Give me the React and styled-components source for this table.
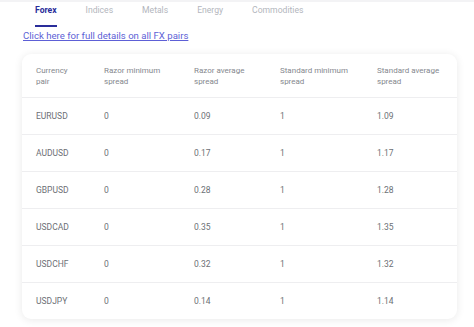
import React from "react";
import styled, { createGlobalStyle } from "styled-components";

const Global = createGlobalStyle`
  html, body { margin: 0; padding: 0; background: #fff; }
  body { font-family: Roboto, "Noto Sans", Arial, sans-serif; }
`;

const Page = styled.div`
  width: 474px;
  height: 327px;
  overflow: hidden;
  border-top: 2px solid #f3f3f5;
  box-sizing: border-box;
`;

const Tabs = styled.div`
  display: flex;
  padding-left: 20.5px;
`;

const Tab = styled.div`
  position: relative;
  padding: 3px 14.5px 0;
  height: 25px;
  box-sizing: border-box;
  font-size: 8.6px;
  font-weight: ${p => (p.$active ? 700 : 400)};
  color: ${p => (p.$active ? "#2a2d9a" : "#b3b6bd")};
  &::after {
    content: "";
    display: ${p => (p.$active ? "block" : "none")};
    position: absolute;
    left: 14.5px;
    right: 14.5px;
    bottom: 0;
    height: 2px;
    background: #2a2d9a;
  }
`;

const Link = styled.a`
  display: block;
  margin: 3px 0 0 23px;
  font-size: 9.6px;
  color: #5d5fd6;
  text-decoration: underline;
`;

const Card = styled.div`
  margin: 13px 0 0 22px;
  width: 435px;
  border-radius: 9px;
  background: #fff;
  box-shadow: 0 1px 8px rgba(0, 0, 0, 0.09);
`;

const Row = styled.div`
  display: grid;
  grid-template-columns: 68px 90px 86px 97px 1fr;
  padding-left: 14px;
  align-items: center;
  height: ${p => (p.$head ? "43px" : "37px")};
  border-top: ${p => (p.$head ? "none" : "1px solid #eeeef0")};
  box-sizing: border-box;
  font-size: ${p => (p.$head ? "8px" : "8.5px")};
  line-height: ${p => (p.$head ? "11px" : "12px")};
  color: ${p => (p.$head ? "#85888e" : "#6c6f75")};
`;

const Cell = styled.div``;

const head = [
  ["Currency", "pair"],
  ["Razor minimum", "spread"],
  ["Razor average", "spread"],
  ["Standard minimum", "spread"],
  ["Standard average", "spread"],
];

const rows = [
  ["EURUSD", "0", "0.09", "1", "1.09"],
  ["AUDUSD", "0", "0.17", "1", "1.17"],
  ["GBPUSD", "0", "0.28", "1", "1.28"],
  ["USDCAD", "0", "0.35", "1", "1.35"],
  ["USDCHF", "0", "0.32", "1", "1.32"],
  ["USDJPY", "0", "0.14", "1", "1.14"],
];

export default function App() {
  return (
    <Page>
      <Global />
      <Tabs>
        {["Forex", "Indices", "Metals", "Energy", "Commodities"].map((t, i) => (
          <Tab key={t} $active={i === 0}>{t}</Tab>
        ))}
      </Tabs>
      <Link href="#">Click here for full details on all FX pairs</Link>
      <Card>
        <Row $head>
          {head.map(h => (
            <Cell key={h[0]}>{h[0]}<br />{h[1]}</Cell>
          ))}
        </Row>
        {rows.map(r => (
          <Row key={r[0]}>
            {r.map((c, i) => <Cell key={i}>{c}</Cell>)}
          </Row>
        ))}
      </Card>
    </Page>
  );
}
